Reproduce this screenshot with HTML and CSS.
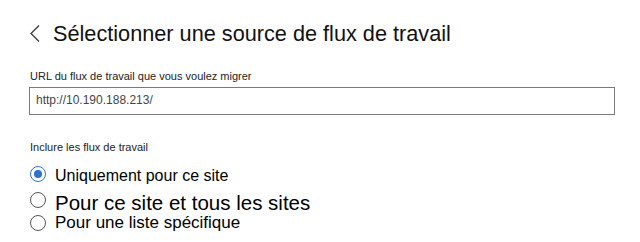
FILE: index.html
```html
<!DOCTYPE html>
<html lang="fr">
<head>
    <meta charset="UTF-8">
    <title>Sélectionner une source de flux de travail</title>
    <link rel="stylesheet" href="styles.css">
</head>
<body>

<div class="panel">
    <div class="panel-title">
        <svg class="back-icon" width="10" height="18" viewBox="0 0 10 18">
            <polyline points="9,0.5 1,8.5 9,16.5" fill="none" stroke="#333" stroke-width="1.2"/>
        </svg>
        <h1>Sélectionner une source de flux de travail</h1>
    </div>

    <label class="field-label" for="txtUrl">URL du flux de travail que vous voulez migrer</label>
    <input class="field-input" type="text" id="txtUrl" value="http://10.190.188.213/"/>

    <div class="group-label">Inclure les flux de travail</div>
    <div class="options">
        <div class="option option-first">
            <span class="radio checked"></span>
            <span class="option-text">Uniquement pour ce site</span>
        </div>
        <div class="option option-big">
            <span class="radio"></span>
            <span class="option-text">Pour ce site et tous les sites</span>
        </div>
        <div class="option option-last">
            <span class="radio"></span>
            <span class="option-text">Pour une liste spécifique</span>
        </div>
    </div>
</div>

</body>
</html>
```

FILE: styles.css
```css
body {
    margin: 0;
    background-color: #fff;
    font-family: "Liberation Sans", Arial, sans-serif;
    color: #000;
}
.panel {
    padding: 20px 0 0 30px;
}

.panel-title {
    display: flex;
    align-items: center;
    height: 28px;
}
.back-icon {
    margin-right: 13px;
}
.panel-title h1 {
    margin: 0;
    font-size: 21.7px;
    font-weight: normal;
    line-height: 28px;
    color: #111;
}

.field-label, .group-label {
    display: block;
    font-size: 11px;
    line-height: 14px;
    color: #222;
}
.field-label {
    margin-top: 21px;
}
.field-input {
    display: block;
    box-sizing: border-box;
    margin: 4px 0 0 -1px;
    width: 586px;
    height: 28px;
    padding: 0 6px 3px 6px;
    border: 1px solid #7a7a7a;
    font-family: "Liberation Sans", Arial, sans-serif;
    font-size: 12px;
    color: #444;
    outline: none;
}

.group-label {
    margin-top: 25px;
}

.options {
    margin-top: 12px;
}
.option {
    display: flex;
    align-items: flex-start;
}
.radio {
    box-sizing: border-box;
    width: 16px;
    height: 16px;
    margin-right: 9px;
    border: 1px solid #555;
    border-radius: 50%;
    display: flex;
    align-items: center;
    justify-content: center;
    flex-shrink: 0;
}
.radio.checked {
    border: 1.5px solid #2b78d6;
}
.radio.checked:after {
    content: "";
    width: 8px;
    height: 8px;
    border-radius: 50%;
    background-color: #2b72d4;
}
.option-first .option-text {
    font-size: 16px;
    line-height: 20px;
}
.option-big {
    margin-top: 6px;
}
.option-big .option-text {
    font-size: 20.5px;
    line-height: 22px;
}
.option-last .radio {
    margin-top: 1px;
}
.option-last .option-text {
    font-size: 17px;
    line-height: 18px;
}
```
